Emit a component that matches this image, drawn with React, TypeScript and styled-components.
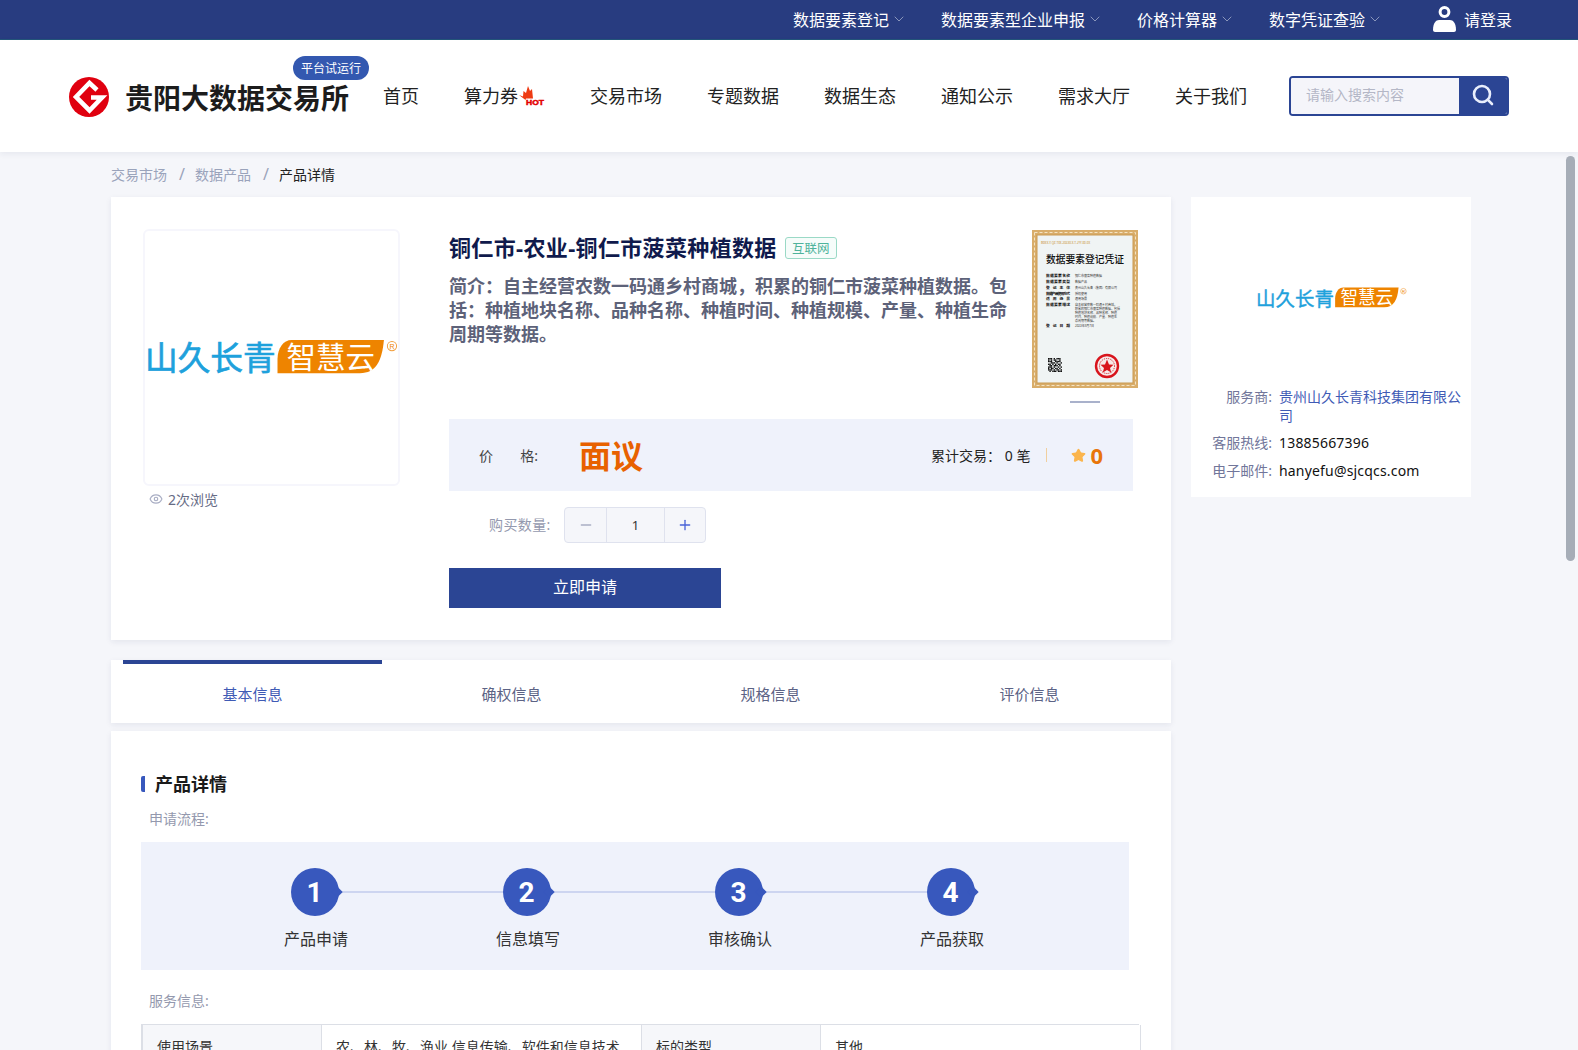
import React from "react";
import styled, { createGlobalStyle } from "styled-components";
import { ChevronDown, Search, Minus, Plus, Eye, Star } from "lucide-react";

const GlobalStyle = createGlobalStyle`
  html, body { margin: 0; padding: 0; height: 100%; overflow: hidden; }
  body {
    font-family: "Noto Sans", "Noto Sans CJK SC", sans-serif;
    font-size: 14px;
    color: #222;
    background: #f5f6fa;
  }
  * { box-sizing: border-box; }
`;

const Page = styled.div`
  height: 100vh;
  display: flex;
  flex-direction: column;
  position: relative;
`;

const TopBar = styled.div`
  flex: none;
  height: 40px;
  background: #283c80;
  border-bottom: 1px solid #24577a;
  display: flex;
  justify-content: flex-end;
  align-items: center;
  padding: 0 66px 1px 0;
  color: #fff;
  font-size: 16px;
`;

const TopLinks = styled.div`
  display: flex;
  gap: 34px;
  margin-right: 50px;
`;

const TopLink = styled.a`
  display: flex;
  align-items: center;
  gap: 2px;
  svg { color: #8a96bb; }
`;

const UserLink = styled.a`
  display: flex;
  align-items: center;
  gap: 8px;
`;

const NavBar = styled.header`
  flex: none;
  height: 112px;
  background: #fff;
  display: flex;
  align-items: center;
  padding-left: 69px;
  box-shadow: 0 2px 6px rgba(30, 40, 90, 0.07);
  position: relative;
  z-index: 2;
`;

const Brand = styled.div`
  display: flex;
  align-items: center;
  gap: 16px;
  position: relative;
  margin-top: 2px;
`;

const BrandName = styled.div`
  font-size: 28px;
  font-weight: 700;
  color: #1c1c1c;
  white-space: nowrap;
`;

const TrialBadge = styled.span`
  position: absolute;
  left: 224px;
  top: -21px;
  width: 76px;
  height: 24px;
  border-radius: 12px;
  background: #3358b0;
  color: #fff;
  font-size: 12px;
  display: flex;
  align-items: center;
  justify-content: center;
`;

const MainNav = styled.nav`
  display: flex;
  gap: 45px;
  margin: 0 0 2px 34px;
  font-size: 18px;
  color: #222;
  white-space: nowrap;
`;

const NavItem = styled.a`
  display: flex;
  align-items: center;
`;

const SearchBox = styled.div`
  margin-left: 42px;
  width: 220px;
  height: 40px;
  border: 2px solid #2b4594;
  border-radius: 4px;
  display: flex;
  overflow: hidden;
`;

const SearchInput = styled.input`
  flex: 1;
  min-width: 0;
  border: 0;
  outline: 0;
  background: #f5f5fa;
  padding: 0 15px 3px;
  font: inherit;
  font-size: 14px;
  &::placeholder { color: #b4b7c6; opacity: 1; }
`;

const SearchButton = styled.button`
  width: 48px;
  border: 0;
  padding: 0 0 2px;
  background: #2b4594;
  color: #e8eefc;
  display: flex;
  align-items: center;
  justify-content: center;
`;

const Scroller = styled.main`
  flex: 1;
  min-height: 0;
  overflow-y: scroll;
  padding-left: 111px;
`;

// the browser hides its own scrollbar here, so the thumb lies over the page
const ScrollThumb = styled.div`
  position: absolute;
  top: 156px;
  right: 3px;
  width: 9px;
  height: 405px;
  border-radius: 5px;
  background: #a6adb7;
  z-index: 3;
`;

const Crumbs = styled.div`
  height: 45px;
  display: flex;
  align-items: center;
  padding-bottom: 2px;
  font-size: 14px;
  color: #9aa3bb;
`;

const CrumbSep = styled.span`
  margin: 0 10px 0 12px;
  font-size: 16px;
  color: #9aa3bb;
`;

const CrumbNow = styled.span`
  color: #222;
`;

const Columns = styled.div`
  display: grid;
  grid-template-columns: 1060px 280px;
  gap: 20px;
  align-items: start;
  width: 1360px;
`;

const MainColumn = styled.div`
  display: flex;
  flex-direction: column;
`;

const Card = styled.section`
  background: #fff;
  box-shadow: 0 2px 6px rgba(30, 40, 90, 0.08);
`;

const ProductCard = styled(Card)`
  padding: 32px;
  display: grid;
  grid-template-columns: 257px 684px;
  gap: 49px;
  height: 443px;
`;

const Gallery = styled.div``;

const CoverBox = styled.div`
  width: 257px;
  height: 257px;
  border: 2px solid #f6f6fc;
  border-radius: 6px;
  display: flex;
  align-items: center;
  justify-content: center;
`;

const Views = styled.div`
  display: flex;
  align-items: center;
  gap: 5px;
  margin: 3px 0 0 6px;
  color: #666b85;
  svg { color: #a9aec4; }
`;

const Detail = styled.div`
  display: flex;
  flex-direction: column;
`;

const Summary = styled.div`
  display: flex;
  justify-content: space-between;
  height: 190px;
`;

const SummaryText = styled.div`
  width: 560px;
`;

const TitleRow = styled.div`
  display: flex;
  align-items: center;
  gap: 8px;
  height: 34px;
`;

const Title = styled.h1`
  margin: 0;
  font-size: 22px;
  font-weight: 700;
  letter-spacing: 0.35px;
  color: #101a4c;
  white-space: nowrap;
`;

const SourceTag = styled.span`
  width: 52px;
  height: 22px;
  margin-top: 3px;
  border: 1px solid #9ad9c6;
  border-radius: 3px;
  background: #f6fcfa;
  color: #4eb39b;
  font-size: 12.5px;
  display: flex;
  align-items: center;
  justify-content: center;
`;

const Intro = styled.p`
  margin: 11px 0 0;
  font-size: 18px;
  line-height: 24px;
  font-weight: 700;
  color: #5d6279;
`;

const CertColumn = styled.div`
  width: 106px;
  margin: 1px -5px 0 0;
  display: flex;
  flex-direction: column;
  align-items: center;
`;

const CertMark = styled.div`
  width: 30px;
  height: 2px;
  margin-top: 13px;
  background: #a9b1cb;
`;

const PriceBand = styled.div`
  height: 72px;
  background: #eff2fb;
  display: flex;
  align-items: center;
  padding: 0 30px;
`;

const PriceLabel = styled.span`
  width: 100px;
  display: flex;
  justify-content: space-between;
  padding-right: 41px;
  color: #444;
`;

const PriceValue = styled.span`
  margin-top: 2px;
  font-size: 32px;
  font-weight: 700;
  color: #e86100;
  line-height: 1;
`;

const Stats = styled.div`
  margin-left: auto;
  display: flex;
  align-items: center;
  color: #222;
  white-space: pre;
`;

const StatDivider = styled.span`
  width: 1px;
  height: 14px;
  background: #f0cf9f;
  margin: 0 24px 0 16px;
`;

const Score = styled.span`
  display: flex;
  align-items: center;
  gap: 4px;
  font-size: 22px;
  font-weight: 700;
  color: #e8750a;
  line-height: 1;
  svg { color: #fbb54d; fill: #fbb54d; }
`;

const QtyRow = styled.div`
  display: flex;
  align-items: center;
  margin-top: 16px;
`;

const QtyLabel = styled.span`
  width: 103px;
  padding: 0 0 2px 40px;
  white-space: nowrap;
  letter-spacing: 0.4px;
  color: #9499ae;
`;

const Stepper = styled.div`
  margin-left: 12px;
  width: 142px;
  height: 36px;
  display: grid;
  grid-template-columns: 41px 1fr 41px;
  background: #f5f6fa;
  border: 1px solid #dfe2ee;
  border-radius: 4px;
`;

const StepCell = styled.span<{ $tone?: string }>`
  display: flex;
  align-items: center;
  justify-content: center;
  color: ${(p) => p.$tone || "#333"};
  font-size: 13px;
  & + & { border-left: 1px solid #dfe2ee; }
`;

const ApplyButton = styled.button`
  margin-top: 25px;
  width: 272px;
  height: 40px;
  border: 0;
  padding: 0 0 4px;
  background: #2b4594;
  color: #fff;
  font: inherit;
  font-size: 16px;
`;

const TabsCard = styled(Card)`
  margin-top: 20px;
  height: 63px;
  padding: 0 12px;
  display: grid;
  grid-template-columns: repeat(4, 259px);
`;

const Tab = styled.a<{ $active?: boolean }>`
  display: flex;
  align-items: center;
  justify-content: center;
  padding-bottom: 1px;
  font-size: 15px;
  color: ${(p) => (p.$active ? "#3f5bb5" : "#5c6385")};
  border-top: 4px solid ${(p) => (p.$active ? "#2b4594" : "transparent")};
`;

const DetailCard = styled(Card)`
  margin-top: 8px;
  padding: 45px 30px 0;
  min-height: 1260px;
`;

const SectionTitle = styled.h2`
  margin: 0;
  font-size: 18px;
  font-weight: 700;
  color: #1a1a1a;
  line-height: 16px;
  border-left: 4px solid #3858bd;
  border-radius: 2px;
  padding-left: 10px;
`;

const FieldLabel = styled.div<{ $gap: number }>`
  margin: ${(p) => p.$gap}px 0 0 8px;
  line-height: 20px;
  color: #9499ae;
`;

const FlowBand = styled.div`
  margin-top: 13px;
  width: 988px;
  height: 128px;
  background: #eff2fb;
  padding: 26px 0 0 69px;
  display: flex;
`;

const Step = styled.div<{ $last?: boolean }>`
  width: 212px;
  display: flex;
  flex-direction: column;
  align-items: center;
  position: relative;
  color: #333;
  font-size: 16px;
  &::after {
    content: "";
    display: ${(p) => (p.$last ? "none" : "block")};
    position: absolute;
    left: 50%;
    width: 100%;
    top: 23px;
    height: 2px;
    background: #cdd5f0;
  }
`;

const StepNumber = styled.div`
  width: 48px;
  height: 48px;
  margin-left: -3px;
  margin-bottom: 10px;
  border-radius: 50%;
  background: #3858bd;
  color: #fff;
  font-family: Roboto, sans-serif;
  font-size: 28px;
  font-weight: 700;
  display: flex;
  align-items: center;
  justify-content: center;
  position: relative;
  z-index: 1;
  &::after {
    content: "";
    position: absolute;
    right: -2px;
    top: 20px;
    width: 8px;
    height: 8px;
    background: #3858bd;
    transform: rotate(45deg);
  }
`;

const ServiceTable = styled.div`
  margin-top: 13px;
  width: 998px;
  display: grid;
  grid-template-columns: 179px 320px 179px 320px;
  border-top: 1px solid #dcdfe6;
  border-left: 2px solid #dcdfe6;
`;

const Cell = styled.div<{ $head?: boolean }>`
  padding: 12px 14px;
  height: 80px;
  line-height: 20px;
  color: #333;
  background: ${(p) => (p.$head ? "#f6f7fa" : "#fff")};
  border-right: 1px solid #dcdfe6;
  border-bottom: 1px solid #dcdfe6;
`;

const SideCard = styled(Card)`
  height: 300px;
  box-shadow: none;
`;

const SideLogo = styled.div`
  height: 191px;
  padding-top: 84px;
  display: flex;
  justify-content: center;
  align-items: flex-start;
`;

const InfoRow = styled.div`
  display: grid;
  grid-template-columns: 81px 1fr;
  gap: 7px;
  padding-right: 8px;
  margin-bottom: 9px;
  line-height: 18.5px;
`;

const InfoLabel = styled.span`
  text-align: right;
  white-space: nowrap;
  color: #71769a;
`;

const InfoValue = styled.span<{ $link?: boolean }>`
  color: ${(p) => (p.$link ? "#3f5bb5" : "#111")};
  letter-spacing: ${(p) => (p.$link ? 0 : "0.18px")};
`;

const GuiyangMark = () => (
  <svg width="40" height="40" viewBox="0 0 40 40">
    <circle cx="20" cy="20" r="20" fill="#e0000f" />
    <path
      d="M28 13 20.5 6 7 20 20.5 33.5 33 20.5 22 20.5"
      fill="none"
      stroke="#fff"
      strokeWidth="4.6"
    />
  </svg>
);

const UserGlyph = () => (
  <svg width="23" height="26" viewBox="0 0 23 26">
    <circle cx="11.5" cy="6" r="4.4" fill="none" stroke="#fff" strokeWidth="3" />
    <path d="M0 24c0-7 3-10 6-10h11c3 0 6 3 6 10 0 1-1 2-2 2H2c-1 0-2-1-2-2z" fill="#fff" />
  </svg>
);

const HotGlyph = () => (
  <svg width="27" height="22" viewBox="0 0 27 22">
    <path d="M1 11 5 12.5 5.5 7 8 9 10 2 12 7 14 5 15 14.5H8L7.5 16z" fill="#ee3a12" />
    <text
      x="8"
      y="21"
      fontSize="8"
      fontWeight="700"
      fill="#e30000"
      stroke="#e30000"
      strokeWidth="0.5"
      textLength="18"
      lengthAdjust="spacingAndGlyphs"
      fontFamily="Liberation Sans, sans-serif"
    >
      HOT
    </text>
  </svg>
);

// provider logo, scaled through its width
const ProviderLogo = ({ width }: { width: number }) => (
  <svg width={width} viewBox="0 -10 252 56">
    <text
      x="0"
      y="31"
      fontSize="33"
      fill="#1ea1dc"
      stroke="#1ea1dc"
      strokeWidth="0.7"
      textLength="130"
      lengthAdjust="spacingAndGlyphs"
      fontFamily="Noto Sans CJK SC, sans-serif"
    >
      山久长青
    </text>
    <path
      d="M146 1H238C236 22 230 34 214 34H132V20C132 9 138 1 146 1Z"
      fill="#ee8400"
    />
    <text
      x="141"
      y="29"
      fontSize="30"
      fill="#fff"
      textLength="88"
      lengthAdjust="spacingAndGlyphs"
      fontFamily="Noto Sans CJK SC, sans-serif"
    >
      智慧云
    </text>
    <circle cx="246" cy="7" r="4.6" fill="none" stroke="#f2a040" strokeWidth="1" />
    <text x="243.6" y="9.5" fontSize="7" fill="#ee8400" fontFamily="Liberation Sans, sans-serif">
      R
    </text>
  </svg>
);

const qrCells = [
  "1110101110", "1010110010", "1110011110", "0011101001", "1101010110",
  "0110111010", "1110100101", "1011011010", "1110101101", "0101110111",
];

const CertRow = ({ y, label, value }: { y: number; label: string; value: string }) => (
  <g>
    <text x="14" y={y} fontSize="3.8" fontWeight="700" fill="#111" textLength="24">
      {label}
    </text>
    <text x="43" y={y} fontSize="3" fill="#333">
      {value}
    </text>
  </g>
);

const certNotes = [
  "积累的铜仁市菠菜种植数据，包括",
  "种植地块名称、品种名称、种植",
  "时间、种植规模、产量、种植生",
  "命周期等数据。",
];

const Certificate = () => (
  <svg width="106" height="158" viewBox="0 0 106 158" fontFamily="Noto Sans CJK SC, sans-serif">
    <rect x="0" y="0" width="106" height="158" fill="#d9ad6a" />
    <rect x="2.5" y="2.5" width="101" height="153" fill="none" stroke="#f3e3c4" strokeDasharray="3 2" />
    <rect x="5" y="5" width="96" height="148" fill="#f0f4f4" stroke="#c99a52" />
    <text x="9" y="14" fontSize="3" fill="#c8912f">BDEX-Y-QZ-TXX-20230-X-T-JYY-00-0X</text>
    <text x="14" y="33" fontSize="10.5" fontWeight="500" fill="#111" textLength="78" lengthAdjust="spacingAndGlyphs">
      数据要素登记凭证
    </text>
    <CertRow y={47} label="数据要素名称" value="铜仁市菠菜种植数据" />
    <CertRow y={53} label="数据要素类型" value="数据产品" />
    <CertRow y={59} label="登记主体" value="贵州山久长青（集团）有限公司" />
    <CertRow y={64.5} label="数据产品使用方式" value="授权使用" />
    <CertRow y={70} label="适用场景" value="通用场景" />
    <CertRow y={76} label="数据要素描述" value="自主经营农数一码通乡村商城，" />
    {certNotes.map((line, i) => (
      <text key={line} x="43" y={80 + i * 4} fontSize="3" fill="#333">
        {line}
      </text>
    ))}
    <CertRow y={97} label="登记日期" value="2023年8月7日" />
    <g fill="#111">
      {qrCells.map((row, r) =>
        row.split("").map((c, i) =>
          c === "1" ? <rect key={`${r}-${i}`} x={16 + i * 1.4} y={128 + r * 1.4} width="1.4" height="1.4" /> : null
        )
      )}
    </g>
    <circle cx="75" cy="136" r="11" fill="#f6e9e9" stroke="#d8141c" strokeWidth="2.4" />
    <circle cx="75" cy="136" r="7.5" fill="none" stroke="#d8141c" strokeWidth="1" strokeDasharray="1 1" />
    <path d="M75 129.5 77 134.5 81.5 134.8 78 138 79.2 142.5 75 140 70.8 142.5 72 138 68.5 134.8 73 134.5z" fill="#d8141c" />
  </svg>
);

const steps = ["产品申请", "信息填写", "审核确认", "产品获取"];

export default function App() {
  return (
    <Page>
      <GlobalStyle />
      <TopBar>
        <TopLinks>
          {["数据要素登记", "数据要素型企业申报", "价格计算器", "数字凭证查验"].map((t) => (
            <TopLink key={t}>
              {t}
              <ChevronDown size={16} strokeWidth={1.5} />
            </TopLink>
          ))}
        </TopLinks>
        <UserLink>
          <UserGlyph />
          请登录
        </UserLink>
      </TopBar>

      <NavBar>
        <Brand>
          <GuiyangMark />
          <BrandName>贵阳大数据交易所</BrandName>
          <TrialBadge>平台试运行</TrialBadge>
        </Brand>
        <MainNav>
          <NavItem>首页</NavItem>
          <NavItem>
            算力券
            <HotGlyph />
          </NavItem>
          <NavItem>交易市场</NavItem>
          <NavItem>专题数据</NavItem>
          <NavItem>数据生态</NavItem>
          <NavItem>通知公示</NavItem>
          <NavItem>需求大厅</NavItem>
          <NavItem>关于我们</NavItem>
        </MainNav>
        <SearchBox>
          <SearchInput placeholder="请输入搜索内容" />
          <SearchButton>
            <Search size={24} strokeWidth={2.6} />
          </SearchButton>
        </SearchBox>
      </NavBar>

      <Scroller>
        <Crumbs>
          交易市场
          <CrumbSep>/</CrumbSep>
          数据产品
          <CrumbSep>/</CrumbSep>
          <CrumbNow>产品详情</CrumbNow>
        </Crumbs>

        <Columns>
          <MainColumn>
            <ProductCard>
              <Gallery>
                <CoverBox>
                  <ProviderLogo width={253} />
                </CoverBox>
                <Views>
                  <Eye size={14} />
                  2次浏览
                </Views>
              </Gallery>
              <Detail>
                <Summary>
                  <SummaryText>
                    <TitleRow>
                      <Title>铜仁市-农业-铜仁市菠菜种植数据</Title>
                      <SourceTag>互联网</SourceTag>
                    </TitleRow>
                    <Intro>
                      简介：自主经营农数一码通乡村商城，积累的铜仁市菠菜种植数据。包括：种植地块名称、品种名称、种植时间、种植规模、产量、种植生命周期等数据。
                    </Intro>
                  </SummaryText>
                  <CertColumn>
                    <Certificate />
                    <CertMark />
                  </CertColumn>
                </Summary>
                <PriceBand>
                  <PriceLabel>
                    <span>价</span>
                    <span>格:</span>
                  </PriceLabel>
                  <PriceValue>面议</PriceValue>
                  <Stats>
                    累计交易： 0 笔
                    <StatDivider />
                    <Score>
                      <Star size={15} />0
                    </Score>
                  </Stats>
                </PriceBand>
                <QtyRow>
                  <QtyLabel>购买数量:</QtyLabel>
                  <Stepper>
                    <StepCell $tone="#a9aec4">
                      <Minus size={16} />
                    </StepCell>
                    <StepCell>1</StepCell>
                    <StepCell $tone="#4a63d8">
                      <Plus size={16} />
                    </StepCell>
                  </Stepper>
                </QtyRow>
                <ApplyButton>立即申请</ApplyButton>
              </Detail>
            </ProductCard>

            <TabsCard>
              <Tab $active>基本信息</Tab>
              <Tab>确权信息</Tab>
              <Tab>规格信息</Tab>
              <Tab>评价信息</Tab>
            </TabsCard>

            <DetailCard>
              <SectionTitle>产品详情</SectionTitle>
              <FieldLabel $gap={17}>申请流程:</FieldLabel>
              <FlowBand>
                {steps.map((s, i) => (
                  <Step key={s} $last={i === steps.length - 1}>
                    <StepNumber>{i + 1}</StepNumber>
                    {s}
                  </Step>
                ))}
              </FlowBand>
              <FieldLabel $gap={21}>服务信息:</FieldLabel>
              <ServiceTable>
                <Cell $head>使用场景</Cell>
                <Cell>农、林、牧、渔业,信息传输、软件和信息技术服务业</Cell>
                <Cell $head>标的类型</Cell>
                <Cell>其他</Cell>
              </ServiceTable>
            </DetailCard>
          </MainColumn>

          <SideCard>
            <SideLogo>
              <ProviderLogo width={151} />
            </SideLogo>
            <InfoRow>
              <InfoLabel>服务商:</InfoLabel>
              <InfoValue $link>贵州山久长青科技集团有限公司</InfoValue>
            </InfoRow>
            <InfoRow>
              <InfoLabel>客服热线:</InfoLabel>
              <InfoValue>13885667396</InfoValue>
            </InfoRow>
            <InfoRow>
              <InfoLabel>电子邮件:</InfoLabel>
              <InfoValue>hanyefu@sjcqcs.com</InfoValue>
            </InfoRow>
          </SideCard>
        </Columns>
      </Scroller>
      <ScrollThumb />
    </Page>
  );
}
